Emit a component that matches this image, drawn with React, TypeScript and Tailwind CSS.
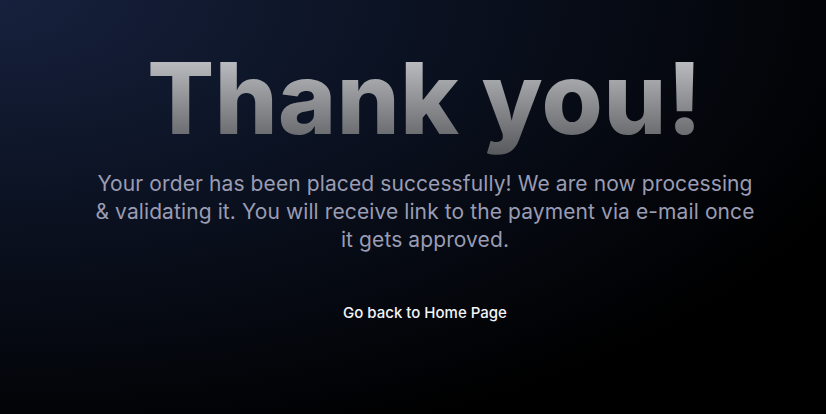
export default function App() {
  return (
    <div className="min-h-screen w-full bg-[radial-gradient(ellipse_at_top_left,#17213d_0%,#0b1222_35%,#000000_80%)] flex flex-col items-center pl-[24px] font-['Inter',sans-serif]">
      <h1 className="mt-[38px] text-[99px] leading-[120px] font-extrabold tracking-[0.5px] bg-gradient-to-b from-[#d4d6da] to-[#545659] bg-clip-text text-transparent">
        Thank you!
      </h1>
      <p className="mt-[12px] w-[664px] text-center text-[21px] leading-[28px] tracking-[0.1px] text-[#9a9cb3]">
        Your order has been placed successfully! We are now processing &amp; validating it. You will receive link to the payment via e-mail once it gets approved.
      </p>
      <a href="#" className="mt-[48px] text-[15px] font-medium text-[#f3f4f8]">
        Go back to Home Page
      </a>
    </div>
  );
}
